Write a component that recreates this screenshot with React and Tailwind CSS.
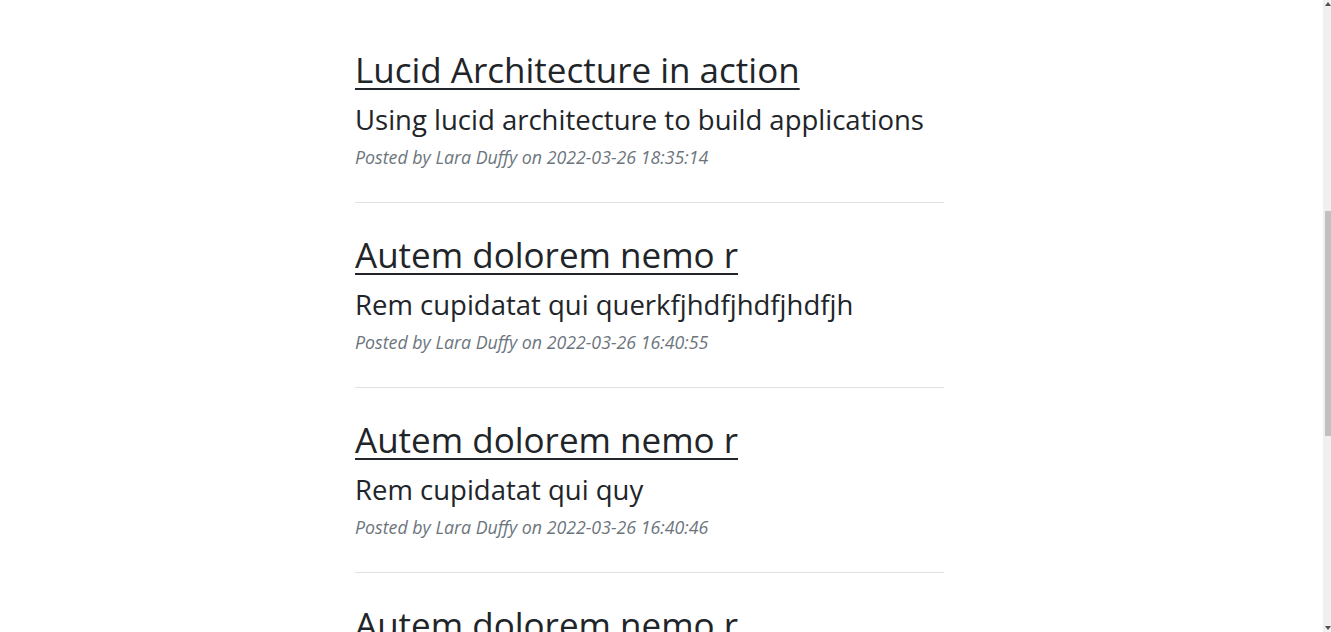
const posts = [
  {
    title: "Lucid Architecture in action",
    subtitle: "Using lucid architecture to build applications",
    date: "2022-03-26 18:35:14",
  },
  {
    title: "Autem dolorem nemo r",
    subtitle: "Rem cupidatat qui querkfjhdfjhdfjhdfjh",
    date: "2022-03-26 16:40:55",
  },
  {
    title: "Autem dolorem nemo r",
    subtitle: "Rem cupidatat qui quy",
    date: "2022-03-26 16:40:46",
  },
  {
    title: "Autem dolorem nemo r",
    subtitle: "Rem cupidatat qui quy",
    date: "2022-03-26 16:40:31",
  },
];

function PostPreview({ post }) {
  return (
    <div>
      <a href="#" className="block">
        <h2 className="text-[35px] leading-[44px] font-medium text-[#212529] underline decoration-2 underline-offset-[5px]">
          {post.title}
        </h2>
        <h3 className="mt-[11px] text-[27.5px] leading-[34px] font-medium text-[#212529]">
          {post.subtitle}
        </h3>
      </a>
      <p className="mt-[8px] text-[17.8px] leading-[24px] italic text-[#6c757d]">
        Posted by Lara Duffy on {post.date}
      </p>
      <hr className="mt-[33px] mb-[30px] border-t border-[#dee2e6]" />
    </div>
  );
}

export default function App() {
  return (
    <div className="flex h-[632px] w-full overflow-hidden bg-white" style={{ fontFamily: '"Open Sans", "Noto Sans", sans-serif' }}>
      <main className="flex-1 pt-[48px]">
        <div className="ml-[355px] w-[589px]">
          {posts.map((post, i) => (
            <PostPreview key={i} post={post} />
          ))}
        </div>
      </main>
      <div className="flex w-[8px] flex-col items-end bg-[#f0f0f0]">
        <div className="mt-[2px] h-0 w-0 border-x-[3px] border-b-[4px] border-x-transparent border-b-[#505050]" />
        <div className="mt-[205px] h-[225px] w-[6px] bg-[#c1c1c1]" />
        <div className="mt-auto mb-[2px] h-0 w-0 border-x-[3px] border-t-[4px] border-x-transparent border-t-[#505050]" />
      </div>
    </div>
  );
}
